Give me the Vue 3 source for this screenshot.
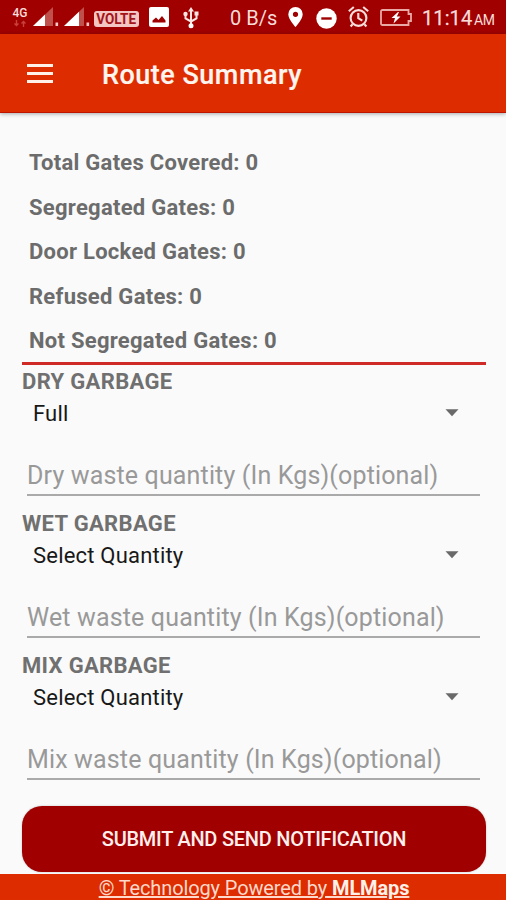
<script setup>
const stats = [
  { key: 'total', label: 'Total Gates Covered', value: 0 },
  { key: 'segregated', label: 'Segregated Gates', value: 0 },
  { key: 'locked', label: 'Door Locked Gates', value: 0 },
  { key: 'refused', label: 'Refused Gates', value: 0 },
  { key: 'mixed', label: 'Not Segregated Gates', value: 0 },
]
const sections = [
  { key: 'dry', title: 'DRY GARBAGE', selected: 'Full', hint: 'Dry waste quantity (In Kgs)(optional)' },
  { key: 'wet', title: 'WET GARBAGE', selected: 'Select Quantity', hint: 'Wet waste quantity (In Kgs)(optional)' },
  { key: 'mix', title: 'MIX GARBAGE', selected: 'Select Quantity', hint: 'Mix waste quantity (In Kgs)(optional)' },
]
</script>

<template>
  <div class="screen">
    <header class="status">
      <div class="net">
        <span class="gen">4G</span>
        <svg width="14" height="7" viewBox="0 0 14 7"><path d="M3.500 0v6M1.500 3.500l2 2 2-2M10.500 7V1M8.500 3.500l2-2 2 2" fill="none" stroke="#c8403c" stroke-width="1.400" /></svg>
      </div>
      <svg class="signal" width="27" height="20" viewBox="0 0 27 20">
        <path d="M0 19 20 0v19z" fill="#c0504c" /><path d="M0 19 12 7.6V19z" fill="#fff" />
        <path d="M22.5 15.5h2.6V19h-2.6z" fill="#f4c9c6" />
      </svg>
      <svg class="signal second" width="27" height="20" viewBox="0 0 27 20">
        <path d="M0 19 20 0v19z" fill="#c0504c" /><path d="M0 19 15 4.7V19z" fill="#fff" />
        <path d="M22.5 15.5h2.6V19h-2.6z" fill="#f4c9c6" />
      </svg>
      <span class="volte"><span>VOLTE</span></span>
      <svg class="picture" width="20" height="20" viewBox="0 0 20 20">
        <rect width="20" height="20" rx="2" fill="#fff" />
        <path d="M3.5 15.5v-2l3.5-3 2.5 2.5 3.5-4 3.5 4.5v2z" fill="#9f0000" />
      </svg>
      <svg class="usb" width="16" height="22" viewBox="0 0 16 22">
        <path d="M8 4v14M2.5 8v3.5L8 14.5l5.5-3V7" fill="none" stroke="#fbe6e4" stroke-width="2" />
        <path d="M8 0l3 4.5H5zM11.5 4.5h4v4h-4z" fill="#fbe6e4" />
        <circle cx="2.5" cy="7" r="2.2" fill="#fbe6e4" /><circle cx="8" cy="18.8" r="2.5" fill="#fff" />
      </svg>
      <span class="speed">0 B/s</span>
      <svg class="pin" width="15" height="20" viewBox="0 0 15 20">
        <path fill-rule="evenodd" d="M7.5 0A7.2 7.2 0 0 0 .3 7.2C.3 12.4 7.5 20 7.5 20s7.2-7.6 7.2-12.8A7.2 7.2 0 0 0 7.5 0zm0 4.7a2.6 2.6 0 1 1 0 5.2 2.6 2.6 0 0 1 0-5.2z" fill="#fff" />
      </svg>
      <svg class="dnd" width="21" height="21" viewBox="0 0 21 21">
        <circle cx="10.5" cy="10.5" r="10.2" fill="#fff" /><path d="M5.3 9.3h10.4v2.4H5.3z" fill="#9f0000" />
      </svg>
      <svg class="alarm" width="21" height="22" viewBox="0 0 21 22">
        <g fill="none" stroke="#f9dedb" stroke-width="2.100">
          <circle cx="10.5" cy="12" r="7.9" /><path d="M10.3 7v5.2l4 2.4M.8 5.2 5.8 1M20.2 5.2 15.2 1M4.6 18.2l-2 2.3M16.4 18.2l2 2.3" />
        </g>
      </svg>
      <svg class="battery" width="33" height="17" viewBox="0 0 33 17">
        <path d="M2.5 1h26v4H31v7h-2.500v4h-26Q1 16 1 14.500v-12Q1 1 2.500 1z" fill="none" stroke="#e9aaa6" stroke-width="1.8" />
        <path d="M18 3 11.500 9h3.500l-1.500 5.500 7-7h-3.700l2.200-4.500z" fill="#fff" />
      </svg>
      <span class="clock">11:14</span><span class="ampm">AM</span>
    </header>

    <nav class="appbar">
      <button class="menu" aria-label="Menu"><i></i><i></i><i></i></button>
      <h1>Route Summary</h1>
    </nav>

    <main>
      <ul class="stats">
        <li v-for="s in stats" :key="s.key">{{ s.label }}: {{ s.value }}</li>
      </ul>
      <section v-for="s in sections" :key="s.key" class="group">
        <h2>{{ s.title }}</h2>
        <div class="select">
          <span>{{ s.selected }}</span>
          <svg width="14" height="8" viewBox="0 0 14 8"><path d="M.5 .3h13L7 7.300z" fill="#696969" /></svg>
        </div>
        <div class="field"><span>{{ s.hint }}</span></div>
      </section>
      <button class="submit">SUBMIT AND SEND NOTIFICATION</button>
    </main>

    <footer><a>© Technology Powered by <b>MLMaps</b></a></footer>
  </div>
</template>

<style>
body { margin: 0; background: #fafafa; }
</style>

<style scoped>
.screen {
  width: 506px; height: 900px; overflow: hidden;
  display: flex; flex-direction: column;
  background: #fafafa; font-family: Roboto, sans-serif; white-space: nowrap;
}
button { border: 0; padding: 0; font: inherit; }
svg { display: block; flex: none; }
.status {
  flex: none; height: 34px; box-sizing: border-box; padding-left: 12px;
  display: flex; align-items: center; background: #a00000; color: #f8dcda;
}
.net { width: 16px; margin-right: 5px; display: flex; flex-direction: column; align-items: center; gap: 1px; }
.gen { font-size: 12px; line-height: 11px; font-weight: 500; }
.signal.second { margin-left: 4px; }
.volte {
  width: 45px; height: 16px; margin: 3px 0 0 3px; border-radius: 3px; background: #f3c5c3; color: #a41418;
  font-size: 15px; line-height: 16.500px; font-weight: 700; flex: none;
  display: flex; justify-content: center;
}
.volte span { transform: scaleX(.9); }
.picture { margin-left: 10px; }
.usb { margin: 2px 0 0 14px; }
.speed { width: 47px; margin: 2px 0 0 31px; font-size: 20px; line-height: 24px; }
.pin { margin-left: 11px; }
.dnd { margin: 2px 0 0 13px; }
.alarm { margin-left: 11px; }
.battery { margin: 1px 0 0 11px; }
.clock { width: 50px; margin: 2px 0 0 9px; font-size: 20px; line-height: 24px; letter-spacing: .1px; -webkit-text-stroke: .25px currentColor; }
.ampm { margin: 5px 0 0 2px; font-size: 14px; line-height: 16px; letter-spacing: -.3px; }
.appbar {
  flex: none; height: 79px; box-sizing: border-box; padding-left: 27px;
  display: flex; align-items: center; background: #dd2c00; color: #fff5ef;
  border-bottom: 1px solid #bf1500; box-shadow: 0 1px 4px rgba(0, 20, 30, .35);
}
.menu { width: 26px; height: 19px; display: flex; flex-direction: column; justify-content: space-between; background: none; }
.menu i { height: 3px; background: #fff0e8; }
h1 { margin: 3px 0 0 49px; font-size: 27px; line-height: 32px; font-weight: 500; letter-spacing: .5px; -webkit-text-stroke: .2px currentColor; }
main { flex: none; height: 761px; box-sizing: border-box; padding: 27px 20px 0 22px; }
.stats { list-style: none; margin: 0 0 -1px; padding: 0 0 0 7px; height: 222px; border-bottom: 3px solid #cf2a26; }
.stats li { height: 44.600px; line-height: 45px; font-size: 22px; font-weight: 700; letter-spacing: .27px; color: #6c6c6c; }
.group { height: 142px; }
h2 { margin: 0; padding-top: 4px; font-size: 22px; line-height: 28px; font-weight: 700; letter-spacing: .33px; color: #707070; }
.select { height: 34px; padding: 0 27px 0 11px; display: flex; align-items: center; justify-content: space-between; font-size: 22px; letter-spacing: .2px; color: #181818; }
.field { height: 66px; margin: 0 6px 0 5px; box-sizing: border-box; padding-top: 32px; border-bottom: 2px solid #aaa; font-size: 25px; line-height: 28px; letter-spacing: .15px; color: #999; }
.submit {
  display: block; width: 464px; height: 66px; margin-top: 16px; border-radius: 20px;
  background: #a00000; color: #fff0ee; font-size: 20px; font-weight: 500; letter-spacing: -.25px;
  box-shadow: 0 0 2px rgba(0, 0, 0, .25);
}
footer { flex: 1; background: #dd2c00; color: #ffd9cb; text-align: center; font-size: 20px; line-height: 28px; letter-spacing: -.12px; padding-left: 2px; }
footer a { text-decoration: underline; text-decoration-thickness: 1.500px; }
footer b { color: #fff0e8; }
</style>
